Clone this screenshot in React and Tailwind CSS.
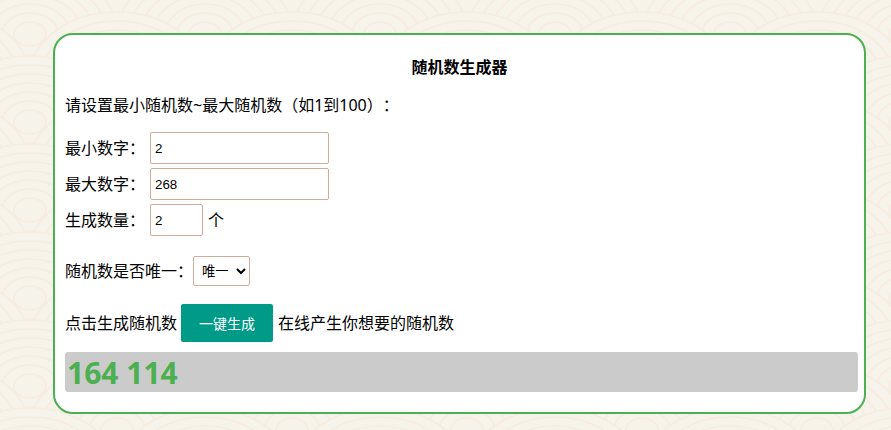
const rows = [0, 1, 2, 3, 4, 5, 6, 7, 8, 9, 10, 11];
const cols = [-1, 0, 1, 2, 3, 4, 5];
const rings = [66, 57, 48, 39, 30, 21, 12];

function Waves() {
  return (
    <svg className="absolute inset-0 h-full w-full" aria-hidden="true">
      {rows.map((r) =>
        cols.map((c) => {
          const cx = 117 + c * 175 + (r % 2 === 0 ? -87 : 0);
          const cy = 78 + (r - 1) * 44;
          return (
            <g key={`${r}-${c}`} fill="#f6f3ea" stroke="#f6ecdf" strokeWidth="1.5">
              {rings.map((ry) => (
                <ellipse key={ry} cx={cx} cy={cy} rx={(ry * 88) / 66} ry={ry} />
              ))}
            </g>
          );
        })
      )}
    </svg>
  );
}

export default function App() {
  const label = "text-[16px] leading-[22px] text-black";
  const input = "h-[32px] border border-[#d0ad9b] rounded-[2px] bg-white px-[4px] font-['Liberation_Sans',sans-serif] text-[13.33px] text-black outline-none";
  return (
    <div className="relative h-[430px] w-[891px] overflow-hidden bg-[#f6f3ea] font-['Noto_Sans','Noto_Sans_CJK_SC',sans-serif] [text-spacing-trim:space-all]">
      <Waves />
      <div className="relative ml-[53px] mt-[33px] h-[381px] w-[813px] rounded-[20px] border-2 border-[#4caf50] bg-white pl-[10px] pr-[6px] pt-[20px]">
        <h1 className="mr-[4px] text-center text-[16px] font-bold leading-[24px] text-black">随机数生成器</h1>
        <p className={`${label} mt-[15px]`}>请设置最小随机数~最大随机数（如1到100）：</p>
        <div className="mt-[16px] flex flex-col gap-[4px]">
          <div className="flex items-center">
            <span className={`${label} w-[85px]`}>最小数字：</span>
            <input className={`${input} w-[179px]`} defaultValue="2" />
          </div>
          <div className="flex items-center">
            <span className={`${label} w-[85px]`}>最大数字：</span>
            <input className={`${input} w-[179px]`} defaultValue="268" />
          </div>
          <div className="flex items-center">
            <span className={`${label} w-[85px]`}>生成数量：</span>
            <input className={`${input} w-[53px]`} defaultValue="2" />
            <span className={`${label} ml-[5px]`}>个</span>
          </div>
        </div>
        <div className="mt-[20px] flex items-center">
          <span className={label}>随机数是否唯一：</span>
          <select className="h-[30px] w-[57px] rounded-[2px] border border-[#d0ad9b] bg-white pl-[4px] text-[13.33px] text-black">
            <option>唯一</option>
          </select>
        </div>
        <div className="mt-[18px] flex items-center">
          <span className={label}>点击生成随机数</span>
          <button className="ml-[4px] h-[38px] w-[92px] rounded-[2px] bg-[#009a89] text-[14px] text-white">一键生成</button>
          <span className={`${label} ml-[5px]`}>在线产生你想要的随机数</span>
        </div>
        <div className="mt-[10px] flex h-[40px] items-center rounded-[3px] bg-[#cbcbcb] px-[2px]">
          <span className="text-[30px] font-bold text-[#4caf50]">164 114</span>
        </div>
      </div>
    </div>
  );
}
